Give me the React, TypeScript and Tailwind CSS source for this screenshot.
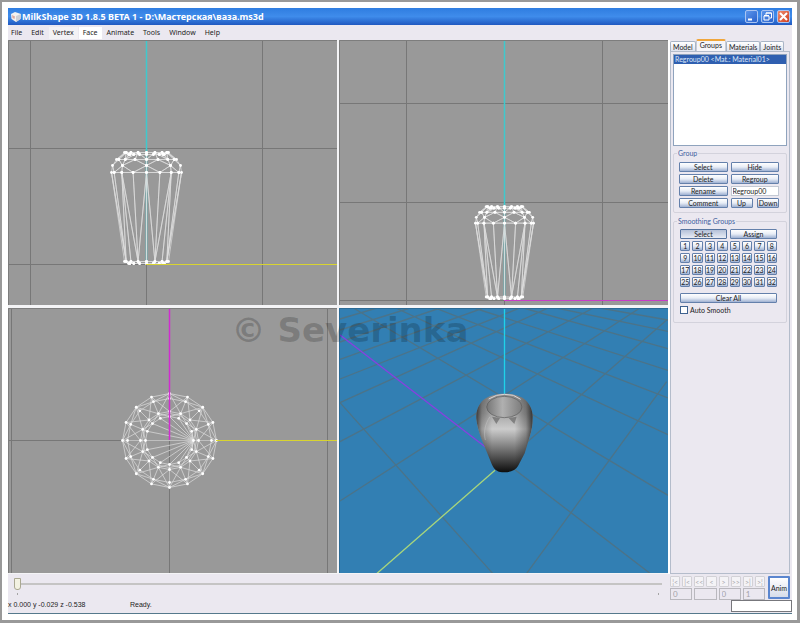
import { useState, type ReactNode } from 'react';

const MENUS = ['File', 'Edit', 'Vertex', 'Face', 'Animate', 'Tools', 'Window', 'Help'];
const TABS = ['Model', 'Groups', 'Materials', 'Joints'];
const TRANSPORT = [
  { label: 'First frame', glyph: '¦<' },
  { label: 'First key', glyph: '|<' },
  { label: 'Previous key', glyph: '<<' },
  { label: 'Previous frame', glyph: '<' },
  { label: 'Next frame', glyph: '>' },
  { label: 'Next key', glyph: '>>' },
  { label: 'Last key', glyph: '>|' },
  { label: 'Last frame', glyph: '>¦' },
];

type Point = [number, number];
type Segment = [Point, Point];

// ── Vase mesh ──────────────────────────────────────────────────────────────────
// Rings run from the lip down to the foot. y is measured up from the ground.
const SEGMENTS = 16;
const RINGS = [
  { r: 18, y: 110 },
  { r: 22, y: 112 },
  { r: 30, y: 105 },
  { r: 34, y: 99 },
  { r: 35, y: 92 },
  { r: 22, y: 3 },
  { r: 18, y: 1 },
];

const angle = (k: number) => (k / SEGMENTS) * Math.PI * 2;
const side = (ring: number, k: number): Point => [
  RINGS[ring].r * Math.sin(angle(k)),
  -RINGS[ring].y,
];
const polar = (r: number, k: number): Point => [r * Math.cos(angle(k)), r * Math.sin(angle(k))];

function sideMesh() {
  const lines: Segment[] = [];
  const dots: Point[] = [];
  for (let k = 0; k < SEGMENTS; k++) {
    for (let ring = 0; ring < RINGS.length; ring++) {
      if (ring === 3) {
        // the shoulder ring has a vertex on every second spoke only
        if (k % 2 === 0) {
          dots.push(side(3, k));
          [-1, 0, 1].forEach((d) => {
            lines.push([side(3, k), side(4, k + d)]);
            lines.push([side(3, k), side(2, k + d)]);
          });
        }
        continue;
      }
      dots.push(side(ring, k));
      lines.push([side(ring, k), side(ring, k + 1)]);
    }
    lines.push([side(0, k), side(1, k)], [side(1, k), side(2, k)]);
    if (k % 2 === 0) lines.push([side(2, k), side(1, k + 1)], [side(2, k), side(1, k - 1)]);
    lines.push([side(4, k), side(5, k)], [side(5, k), side(6, k)]);
    if (k % 2 === 0) lines.push([side(4, k), side(5, k + 1)], [side(4, k), side(5, k - 1)]);
  }
  return { lines, dots };
}

function topMesh() {
  const radii = [24, 29, 42, 47];
  const lines: Segment[] = [];
  const dots: Point[] = [];
  for (let k = 0; k < SEGMENTS; k++) {
    radii.forEach((r) => {
      dots.push(polar(r, k));
      lines.push([polar(r, k), polar(r, k + 1)]);
    });
    lines.push([polar(27, k), polar(27, k + 1)]);
    lines.push([polar(24, k), polar(47, k)]);
    lines.push([polar(24, 0), polar(24, k)]);
    if (k % 2 === 0) {
      [-1, 1].forEach((d) => {
        lines.push([polar(47, k), polar(29, k + d)]);
        lines.push([polar(47, k), polar(42, k + d)]);
        lines.push([polar(29, k), polar(47, k + d)]);
        lines.push([polar(24, k), polar(29, k + d)]);
      });
    }
  }
  return { lines, dots };
}

const SIDE = sideMesh();
const TOP = topMesh();

function Mesh({ mesh, x, y, scale = 1 }: { mesh: typeof SIDE; x: number; y: number; scale?: number }) {
  return (
    <g transform={`translate(${x} ${y})`}>
      <path
        d={mesh.lines
          .map(([a, b]) => `M${a[0] * scale} ${a[1] * scale}L${b[0] * scale} ${b[1] * scale}`)
          .join('')}
        stroke="#dedede"
        strokeWidth="0.7"
        fill="none"
      />
      {mesh.dots.map(([px, py], i) => (
        <circle key={i} cx={px * scale} cy={py * scale} r="1.4" fill="#fff" />
      ))}
    </g>
  );
}

// ── Viewports ──────────────────────────────────────────────────────────────────
function OrthoView({ label, xs, ys, children }: { label: string; xs: number[]; ys: number[]; children: ReactNode }) {
  return (
    <svg viewBox="0 0 329 265" role="img" aria-label={label} className="block w-full bg-[#999999]">
      {xs.map((x) => (
        <path key={x} d={`M${x + 0.5} 0V265`} stroke="#777777" />
      ))}
      {ys.map((y) => (
        <path key={y} d={`M0 ${y + 0.5}H329`} stroke="#777777" />
      ))}
      {children}
      <path d="M0.5 265V0.5H329" stroke="#7d7d7d" fill="none" />
    </svg>
  );
}

const FLOOR = [
  // towards the lower left
  'M980 60L465 511',
  'M980 245L560 820',
  'M900 24L0 603',
  'M760 24L0 425',
  'M625 24L0 308',
  'M540 24L0 237',
  'M430 24L0 178',
  'M300 24L0 126',
  'M210 24L0 90',
  'M110 24L0 57',
  // towards the lower right
  'M0 308L458 820',
  'M435 440L930 820',
  'M40 24L984 586',
  'M167 24L984 404',
  'M285 24L984 294',
  'M402 24L984 211',
  'M550 24L984 146',
  'M650 24L984 94',
  'M780 24L984 60',
];

function PerspectiveView() {
  return (
    <svg viewBox="-3 24 987 795" role="img" aria-label="Perspective view" className="block w-full bg-[#327fb3]">
      <defs>
        <linearGradient id="body" x1="0" y1="0" x2="0" y2="1">
          <stop offset="0" stopColor="#8a8a8a" />
          <stop offset="0.25" stopColor="#a4a4a4" />
          <stop offset="0.45" stopColor="#cccccc" />
          <stop offset="0.62" stopColor="#939393" />
          <stop offset="0.82" stopColor="#4c4c4c" />
          <stop offset="1" stopColor="#0c0c0c" />
        </linearGradient>
        <linearGradient id="edges">
          <stop offset="0" stopColor="#000" stopOpacity="0.65" />
          <stop offset="0.1" stopColor="#000" stopOpacity="0.25" />
          <stop offset="0.28" stopColor="#000" stopOpacity="0" />
          <stop offset="0.68" stopColor="#000" stopOpacity="0" />
          <stop offset="0.88" stopColor="#000" stopOpacity="0.28" />
          <stop offset="1" stopColor="#000" stopOpacity="0.7" />
        </linearGradient>
        <linearGradient id="mouth">
          <stop offset="0" stopColor="#767676" />
          <stop offset="0.45" stopColor="#b0b0b0" />
          <stop offset="1" stopColor="#7c7c7c" />
        </linearGradient>
        <path
          id="vase"
          d="M493 281C470 281 442 288 430 300C414 315 408 334 409 356C411 376 416 392 422 410L442 460L456 494C463 510 474 517 493 517C512 517 527 510 534 498L554 460L569 410C575 392 578 376 578 354C579 334 572 315 556 300C543 288 516 281 493 281Z"
        />
      </defs>
      <path d={FLOOR.join('')} stroke="#4c7388" strokeWidth="4" fill="none" />
      <path d="M0 105L440 444" stroke="#8840e0" strokeWidth="4" />
      <path d="M465 511L110 821" stroke="#a8d67c" strokeWidth="4" />
      <path d="M493.500 24V284" stroke="#1fd2ea" strokeWidth="4" />
      <use href="#vase" fill="url(#body)" />
      <use href="#vase" fill="url(#edges)" />
      <path d="M456 350L480 354L469 372ZM506 354L530 350L523 372Z" fill="#5c5c5c" fillOpacity="0.6" />
      <path d="M446 297L470 286L493 283L520 286L542 298" fill="none" stroke="#dcd6d6" strokeWidth="3" />
      <ellipse cx="493" cy="321" rx="53" ry="32" fill="url(#mouth)" stroke="#5a5a5a" strokeWidth="2" />
      <path d="M436 420C430 396 436 370 450 350" fill="none" stroke="#d0d0d0" strokeWidth="3" strokeOpacity="0.4" />
      <path d="M-1.500 819V25.500H984" stroke="#2b6a95" strokeWidth="3" fill="none" />
    </svg>
  );
}

function Viewports() {
  return (
    <main className="relative min-w-0 flex-1 bg-[#f4f4f6] pb-px">
      <div className="grid grid-cols-2 gap-x-[2px] gap-y-[3px]">
        <OrthoView label="Front view" xs={[22, 138, 254]} ys={[108, 224]}>
          <path d="M138.500 0V224" stroke="#3fc9cd" strokeWidth="1.500" />
          <Mesh mesh={SIDE} x={138.5} y={224.5} />
          <path d="M138 224.500H329" stroke="#d8d430" />
        </OrthoView>
        <OrthoView label="Side view" xs={[67, 165, 263]} ys={[63, 162, 260]}>
          <path d="M165.500 0V260" stroke="#3fc9cd" strokeWidth="1.500" />
          <Mesh mesh={SIDE} x={165.5} y={259.5} scale={0.83} />
          <path d="M165 260.500H329" stroke="#c83cc8" />
        </OrthoView>
        <OrthoView label="Top view" xs={[3, 161, 319]} ys={[132]}>
          <Mesh mesh={TOP} x={161.5} y={132.5} />
          <path d="M161.500 0V132" stroke="#d02cd0" strokeWidth="1.500" />
          <path d="M208 132.500H329" stroke="#d8d430" />
        </OrthoView>
        <PerspectiveView />
      </div>
      <p className="pointer-events-none absolute inset-x-0 top-[270px] pl-[24px] text-center font-['DejaVu_Sans',sans-serif] text-[34px] leading-[40px] font-bold text-black/20">
        © Severinka
      </p>
    </main>
  );
}

// ── Controls ───────────────────────────────────────────────────────────────────
function PushButton({ children, className = '' }: { children: ReactNode; className?: string }) {
  return (
    <button
      className={`flex h-[10px] items-center justify-center overflow-hidden rounded-[1px] border border-[#6480ab] bg-linear-to-b from-white via-[#e8edf6] to-[#9fb1d2] leading-[8px] ${className}`}
    >
      {children}
    </button>
  );
}

function TitleBar() {
  const box = 'flex size-[13px] items-center justify-center rounded-[2px] border border-[#a9c4f2]';
  return (
    <header className="flex h-[17px] items-center bg-linear-to-b from-[#2f7de0] via-[#3f8ceb] to-[#2058c0] pr-[2px] pl-[2px]">
      <svg viewBox="0 0 12 12" className="size-[12px]" aria-hidden="true">
        <path d="M1 3L5 1L11 3L10.500 8L6 11L1.500 8Z" fill="#f4f2f0" />
        <path d="M6 5L11 3L10.500 8L6 11Z" fill="#cfd0d6" />
        <path d="M2 4L5 5.500L4.500 8L2.500 7Z" fill="#dca9a0" />
      </svg>
      <h1 className="flex-1 truncate font-['Noto_Sans',sans-serif] text-[9px] leading-[12px] font-bold text-white">
        MilkShape 3D 1.8.5 BETA 1 - D:\Мастерская\ваза.ms3d
      </h1>
      <div className="flex gap-[3px]">
        <button aria-label="Minimize" className={`${box} bg-linear-to-br from-[#5c96ec] to-[#2a62cc]`}>
          <svg viewBox="0 0 11 11" className="size-[11px]">
            <path d="M2 8.500H6" stroke="#fff" strokeWidth="2" />
          </svg>
        </button>
        <button aria-label="Restore" className={`${box} bg-linear-to-br from-[#5c96ec] to-[#2a62cc]`}>
          <svg viewBox="0 0 11 11" className="size-[11px]" fill="none" stroke="#fff">
            <path d="M4 4V2H9.500V7H7.500M4 2H9.500" />
            <path d="M2 5H7V9H2ZM2 4.500H7" />
          </svg>
        </button>
        <button aria-label="Close" className={`${box} bg-linear-to-br from-[#ec8a6c] to-[#d03c1c]`}>
          <svg viewBox="0 0 11 11" className="size-[11px]">
            <path d="M2 2L9 9M9 2L2 9" stroke="#fff" strokeWidth="2" />
          </svg>
        </button>
      </div>
    </header>
  );
}

function SidePanel() {
  const [tab, setTab] = useState('Groups');
  return (
    <aside className="flex w-[124px] shrink-0 flex-col border-l-2 border-white pr-[2px]">
      <div role="tablist" className="flex h-[11px] items-end">
        {TABS.map((name) => (
          <button
            key={name}
            role="tab"
            aria-selected={tab === name}
            onClick={() => setTab(name)}
            className={`rounded-t-[2px] border border-b-0 leading-[8px] ${
              tab === name
                ? 'h-[12px] border-[#c9ccd6] border-t-2 border-t-[#f0a63c] bg-[#f6f5f9] px-[3px] pb-[2px]'
                : 'h-[10px] border-[#a9b5c6] bg-linear-to-b from-white to-[#dfe3ee] px-[2px]'
            }`}
          >
            {name}
          </button>
        ))}
      </div>

      <div className="flex-1 border border-[#b4bccb] bg-[#ebe8f0] px-[2px] pt-[2px]">
        <ul role="listbox" aria-label="Groups" className="h-[92px] border border-[#8fa3bd] bg-white">
          <li role="option" aria-selected="true" className="h-[9px] truncate bg-[#2f5fb0] px-px leading-[9px] text-[#dfe8fa]">
            Regroup00 &lt;Mat.: Material01&gt;
          </li>
        </ul>

        <fieldset className="mt-[2px] rounded-[2px] border border-[#d3d2dc] pt-[4px] pr-[7px] pb-[4px] pl-[5px]">
          <legend className="-ml-[2px] px-px leading-[10px] text-[#3f5f9f]">Group</legend>
          <div className="grid grid-cols-2 gap-x-[3px] gap-y-[2px]">
            <PushButton>Select</PushButton>
            <PushButton>Hide</PushButton>
            <PushButton>Delete</PushButton>
            <PushButton>Regroup</PushButton>
            <PushButton>Rename</PushButton>
            <input
              aria-label="Group name"
              defaultValue="Regroup00"
              className="h-[10px] w-full min-w-0 border border-[#c3c9d4] bg-white px-px leading-[8px]"
            />
            <PushButton>Comment</PushButton>
            <div className="flex justify-between">
              <PushButton className="w-[22px]">Up</PushButton>
              <PushButton className="w-[22px]">Down</PushButton>
            </div>
          </div>
        </fieldset>

        <fieldset className="mt-[3px] rounded-[2px] border border-[#d3d2dc] pt-[3px] pr-[9px] pb-[8px] pl-[6px]">
          <legend className="-ml-[3px] px-px leading-[10px] text-[#3f5f9f]">Smoothing Groups</legend>
          <div className="grid grid-cols-2 gap-x-[3px]">
            <button className="h-[10px] rounded-[1px] border border-[#55739f] bg-linear-to-b from-[#b4c1d8] to-[#e9edf5] leading-[8px]">
              Select
            </button>
            <PushButton className="border-[#2f62c4]">Assign</PushButton>
          </div>
          <div className="mt-[2px] grid grid-cols-8 gap-[2px]">
            {Array.from({ length: 32 }, (_, i) => (
              <PushButton key={i}>{i + 1}</PushButton>
            ))}
          </div>
          <PushButton className="mt-[6px] w-full">Clear All</PushButton>
          <label className="mt-[3px] flex items-center gap-[2px] leading-[8px]">
            <input type="checkbox" className="size-[8px] appearance-none border border-[#3f6290] bg-white checked:bg-[#3f6290]" />
            Auto Smooth
          </label>
        </fieldset>
      </div>
    </aside>
  );
}

function Timeline() {
  const field = 'h-[12px] w-full min-w-0 border border-[#b9b8be] bg-[#ebe8f0] px-[2px] text-[8px] leading-[10px] text-[#a3a2a8]';
  return (
    <section aria-label="Animation" className="flex h-[26px]">
      <div className="flex flex-1 flex-col pt-[4px] pr-[6px] pl-[6px]">
        <input
          type="range"
          aria-label="Frame"
          defaultValue={0}
          className="h-[12px] w-full appearance-none bg-transparent [&::-webkit-slider-runnable-track]:h-[2px] [&::-webkit-slider-runnable-track]:bg-[#c5c4c4] [&::-webkit-slider-thumb]:-mt-[5px] [&::-webkit-slider-thumb]:h-[12px] [&::-webkit-slider-thumb]:w-[7px] [&::-webkit-slider-thumb]:appearance-none [&::-webkit-slider-thumb]:rounded-b-[3px] [&::-webkit-slider-thumb]:border [&::-webkit-slider-thumb]:border-[#aaa892] [&::-webkit-slider-thumb]:bg-[#f3f2e2]"
        />
        <div className="mt-[3px] flex justify-between px-[3px]">
          <span className="h-[2px] w-px bg-[#a5a5a5]" />
          <span className="h-[2px] w-px bg-[#a5a5a5]" />
        </div>
      </div>
      <div className="flex w-[124px] gap-[3px] pt-[2px] pr-[2px] pl-[2px]">
        <div className="flex flex-1 flex-col gap-px">
          <div className="grid grid-cols-8 gap-[2px]">
            {TRANSPORT.map(({ label, glyph }) => (
              <button
                key={label}
                aria-label={label}
                disabled
                className="flex h-[11px] items-center justify-center rounded-[1px] border border-[#d2d1d6] bg-[#f4f3f6] text-[7px] leading-[8px] text-[#a9a8ad]"
              >
                {glyph}
              </button>
            ))}
          </div>
          <div className="grid grid-cols-4 gap-[2px]">
            <input aria-label="Current frame" disabled defaultValue="0" className={field} />
            <input aria-label="Key" disabled defaultValue="" className={field} />
            <input aria-label="Start frame" disabled defaultValue="0" className={field} />
            <input aria-label="End frame" disabled defaultValue="1" className={field} />
          </div>
        </div>
        <button className="h-[23px] w-[22px] rounded-[1px] border-2 border-[#5b86cf] bg-linear-to-b from-white to-[#d6dcea]">
          Anim
        </button>
      </div>
    </section>
  );
}

export default function App() {
  return (
    <div className="border-2 border-r-3 border-b-3 border-[#999999] bg-white p-[6px] pr-[5px] font-['Lato',sans-serif] text-[7px] leading-[10px] text-[#1c1c1c]">
      <div className="bg-[#ebe8f0]">
        <TitleBar />
        <nav className="-ml-px flex h-[15px] items-center gap-px font-['Noto_Sans',sans-serif]">
          {MENUS.map((name) => (
            <button
              key={name}
              className={`h-[12px] px-[4px] ${name === 'Face' ? 'bg-white' : name === 'Vertex' ? 'bg-[#f3f2f5]' : ''}`}
            >
              {name}
            </button>
          ))}
        </nav>
        <div className="flex">
          <Viewports />
          <SidePanel />
        </div>
        <Timeline />
        <footer className="flex h-[14px] items-start border-b border-[#55798c] font-['Liberation_Sans',sans-serif]">
          <span className="w-[122px]">x 0.000 y -0.029 z -0.538</span>
          <span className="flex-1">Ready.</span>
          <input aria-label="Progress" readOnly className="h-[12px] w-[61px] border border-[#77777c] bg-white" />
        </footer>
      </div>
    </div>
  );
}
